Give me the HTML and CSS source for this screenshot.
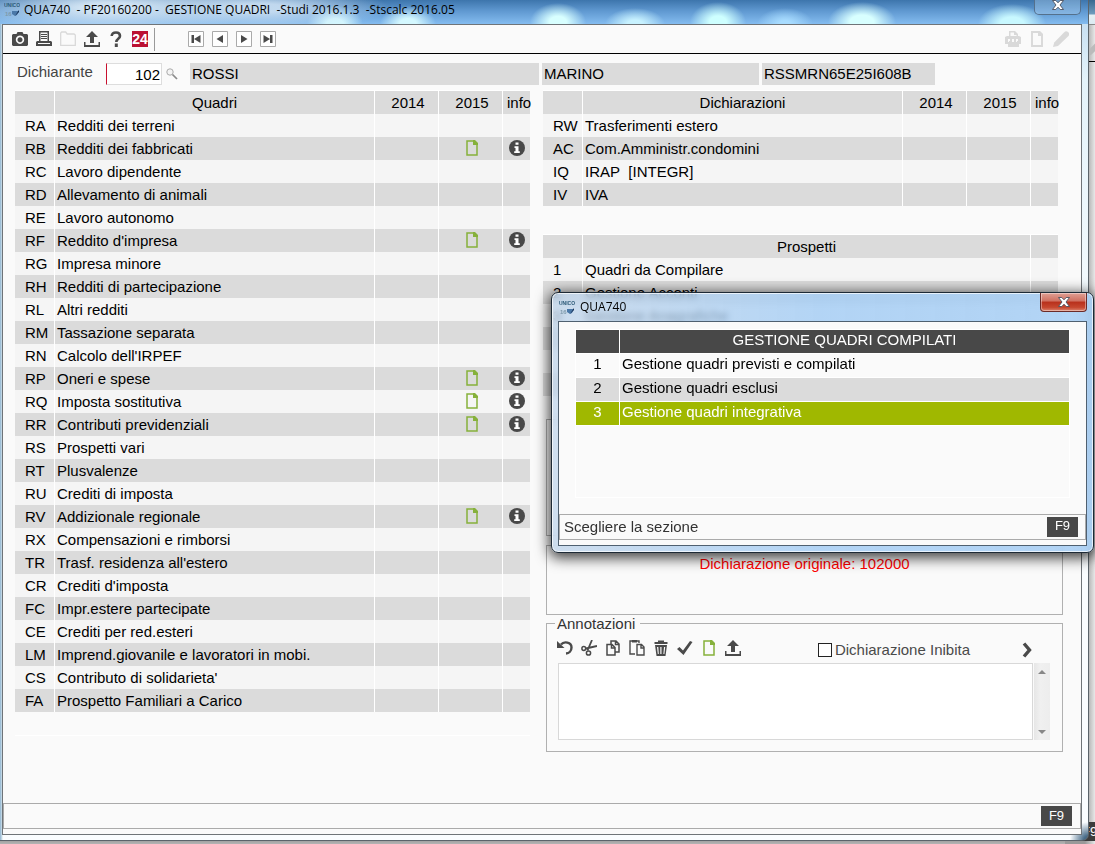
FILE: index.html
```html
<!DOCTYPE html>
<html lang="it">
<head>
<meta charset="utf-8">
<title>QUA740 - Gestione quadri</title>
<link rel="stylesheet" href="styles.css">
</head>
<body>
<svg class="sprite" aria-hidden="true">
  <symbol id="app" viewBox="0 0 16 16"><text class="logo-name" x="0" y="6">UNICO</text><text class="logo-year" x="1" y="15">16</text><path d="M8 10h7l-2 4-2 1-3-2z" fill="#4a78a8"/><path d="M15 9v2l-4 4z" fill="#132b50"/></symbol>
  <symbol id="camera" viewBox="0 0 16 16"><path fill-rule="evenodd" d="M1 3h3.500l1-2h5l1 2H15l1 1v10l-1 1H1l-1-1V4zM8 4.500a4.200 4.200 0 1 0 .01 0zM8 6.200a2.500 2.500 0 1 1-.01 0z"/></symbol>
  <symbol id="print" viewBox="0 0 16 16"><path fill-rule="evenodd" d="M3 0h10v10h2l1 1v4H0v-4l1-1h2zM4.500 1.500V10h7V1.500zM5 3h6v1H5zM5 5h6v1H5zM5 7h6v1H5zM2 12v1h12v-1z"/></symbol>
  <symbol id="folder" viewBox="0 0 16 16"><path d="M.700 14.300V2l1-1h4l1.500 2H14l1.300 1v10.300z" fill="none" stroke="currentColor" stroke-width="1.300"/></symbol>
  <symbol id="upload" viewBox="0 0 16 16"><path d="M8 0l6 6h-4v6H6V6H2zM0 11h1.500v3h13v-3H16v5H0z"/></symbol>
  <symbol id="help" viewBox="0 0 16 16"><path d="M3.700 5C3.900 2.500 5.500 1.500 8 1.500s4 1.400 4 3.400c0 3-3.700 2.600-3.700 6.100" fill="none" stroke="currentColor" stroke-width="2.600"/><path d="M6.800 12.500h3V16h-3z"/></symbol>
  <symbol id="first" viewBox="0 0 16 16"><path d="M.500.500h15v15H.500z" fill="#fff" stroke="#aaa"/><path d="M3.500 4H6v8H3.500zM12.500 4v8L6 8z"/></symbol>
  <symbol id="prev" viewBox="0 0 16 16"><path d="M.500.500h15v15H.500z" fill="#fff" stroke="#aaa"/><path d="M11 4v8L4.500 8z"/></symbol>
  <symbol id="next" viewBox="0 0 16 16"><path d="M.500.500h15v15H.500z" fill="#fff" stroke="#aaa"/><path d="M5 4v8l6.500-4z"/></symbol>
  <symbol id="last" viewBox="0 0 16 16"><path d="M.500.500h15v15H.500z" fill="#fff" stroke="#aaa"/><path d="M12.500 4H10v8h2.500zM3.500 4v8L10 8z"/></symbol>
  <symbol id="pdf" viewBox="0 0 16 16"><path fill-rule="evenodd" d="M4 0h6l3 3v2h1l2 1v7h-2v3H3v-3H0V6l2-1h2zM5.500 1.500V5h6V4H9V1.500zM3 8v3h1v-1h1V8zM7 8v3h2V8zM11 8v3h1v-1h1V8z"/></symbol>
  <symbol id="page" viewBox="0 0 16 16"><path d="M3 1h7l3 3v11H3z" fill="none" stroke="currentColor" stroke-width="1.900"/><path d="M9 0v5h5V3l-3-3z"/></symbol>
  <symbol id="doc" viewBox="0 0 12 16"><path d="M1 1h6.500L11 4.500V15H1z" fill="none" stroke="#86b13b" stroke-width="1.500"/><path d="M7 0v5h5V3L9 0z" fill="#86b13b"/></symbol>
  <symbol id="pencil" viewBox="0 0 16 16"><path d="M0 16l1.200-4.500L11 1.500Q13-.5 15 1t.5 4L5 15z"/></symbol>
  <symbol id="info" viewBox="0 0 16 16"><circle cx="8" cy="8" r="8"/><path d="M6.500 2.500h3v2.300h-3zM5.500 6.300h4v5h1.300V13H5.200v-1.700h1.300V8h-1z" fill="#fff"/></symbol>
  <symbol id="lens" viewBox="0 0 12 12"><circle cx="4" cy="4" r="3.200" fill="#f4f4f4" stroke="#aaa"/><path d="M6.500 6.500l4.500 4.500" stroke="#8a8a8a" stroke-width="1.700"/></symbol>
  <symbol id="undo" viewBox="0 0 16 16"><path d="M4 4.500C7 1 14.500 2 14.500 7.500 14.500 11 12 13.300 9 13.500" fill="none" stroke="currentColor" stroke-width="2.400"/><path d="M0 1v7h7.500z"/></symbol>
  <symbol id="cut" viewBox="0 0 16 16"><path d="M5 8.500L16 6M6.500 10.500L11 0" fill="none" stroke="currentColor" stroke-width="1.800"/><circle cx="2.800" cy="8.500" r="1.900" fill="none" stroke="currentColor" stroke-width="1.500"/><circle cx="7.500" cy="13" r="2.100" fill="none" stroke="currentColor" stroke-width="1.500"/></symbol>
  <symbol id="copy" viewBox="0 0 16 16"><path d="M6 4V1h5l3 3v8h-4M2 4.500h5l3 3V15H2zM6.500 5v3H10M10.500 1v3.500H14" fill="none" stroke="currentColor" stroke-width="1.500"/></symbol>
  <symbol id="paste" viewBox="0 0 16 16"><path d="M6 14H1V1h9v2M8 4.500h4.500L15 7v8H8zM12 5v3h3" fill="none" stroke="currentColor" stroke-width="1.400"/><path d="M3 0h5v2.500H3z"/></symbol>
  <symbol id="trash" viewBox="0 0 16 16"><path fill-rule="evenodd" d="M1.500 2H5V.5h6V2h3.500v2h-13zM2 5h12l-1.500 11h-9zM4 7l.8 7h1L5.300 7zM7.300 7v7h1.200V7zM11 7l-.6 7h1L12.200 7z"/></symbol>
  <symbol id="check" viewBox="0 0 16 16"><path d="M0 9l2.500-2L6 10.500 13 1l2.500 1L6.500 15z"/></symbol>
  <symbol id="chevron" viewBox="0 0 10 16"><path d="M2 1.500L7.500 8 2 14.500" fill="none" stroke="currentColor" stroke-width="3.400"/></symbol>
  <symbol id="close" viewBox="0 0 12 10"><path d="M.500.500h3.300L6 2.800 8.200.500h3.300L8 5l3.500 4.500H8.200L6 7.200 3.800 9.500H.500L4 5z" fill="#fff" stroke="#4b4f5c" stroke-width=".9"/></symbol>
</svg>

<div class="behind" aria-hidden="true">
  <svg class="behind-icon"><use href="#pencil"/></svg>
  <span class="behind-key">F9</span>
</div>

<main class="window">
  <header class="titlebar">
    <svg class="icon"><use href="#app"/></svg>
    <h1 class="title">QUA740&nbsp; - PF20160200 -&nbsp; GESTIONE QUADRI&nbsp; -Studi 2016.1.3&nbsp; -Stscalc 2016.05</h1>
    <button class="close glass" aria-label="Chiudi"><svg><use href="#close"/></svg></button>
  </header>

  <div class="client">
    <nav class="toolbar">
      <button class="tool" aria-label="Cattura"><svg class="icon"><use href="#camera"/></svg></button>
      <button class="tool" aria-label="Stampa"><svg class="icon"><use href="#print"/></svg></button>
      <button class="tool off" aria-label="Cartella"><svg class="icon"><use href="#folder"/></svg></button>
      <button class="tool" aria-label="Invia"><svg class="icon"><use href="#upload"/></svg></button>
      <button class="tool" aria-label="Aiuto"><svg class="icon"><use href="#help"/></svg></button>
      <button class="tool brand">24</button>
      <span class="divider"></span>
      <button class="tool" aria-label="Primo"><svg class="icon"><use href="#first"/></svg></button>
      <button class="tool" aria-label="Precedente"><svg class="icon"><use href="#prev"/></svg></button>
      <button class="tool" aria-label="Successivo"><svg class="icon"><use href="#next"/></svg></button>
      <button class="tool" aria-label="Ultimo"><svg class="icon"><use href="#last"/></svg></button>
      <span class="spacer"></span>
      <button class="tool off" aria-label="PDF"><svg class="icon"><use href="#pdf"/></svg></button>
      <button class="tool off" aria-label="Documento"><svg class="icon"><use href="#page"/></svg></button>
      <button class="tool off" aria-label="Modifica"><svg class="icon"><use href="#pencil"/></svg></button>
    </nav>

    <div class="person">
      <label class="person-label" for="dichiarante">Dichiarante</label>
      <input class="person-code" id="dichiarante" value="102">
      <button class="search" aria-label="Cerca"><svg><use href="#lens"/></svg></button>
      <output class="field">ROSSI</output>
      <output class="field">MARINO</output>
      <output class="field">RSSMRN65E25I608B</output>
    </div>

    <div class="columns">
      <div class="list">
        <table class="grid">
          <colgroup><col class="c-code"><col><col class="c-year"><col class="c-year"><col class="c-info"></colgroup>
          <thead><tr><th></th><th>Quadri</th><th>2014</th><th>2015</th><th>info</th></tr></thead>
          <tbody>
            <tr><td>RA</td><td>Redditi dei terreni</td><td></td><td></td><td></td></tr>
            <tr><td>RB</td><td>Redditi dei fabbricati</td><td></td><td><svg class="doc"><use href="#doc"/></svg></td><td><svg class="info"><use href="#info"/></svg></td></tr>
            <tr><td>RC</td><td>Lavoro dipendente</td><td></td><td></td><td></td></tr>
            <tr><td>RD</td><td>Allevamento di animali</td><td></td><td></td><td></td></tr>
            <tr><td>RE</td><td>Lavoro autonomo</td><td></td><td></td><td></td></tr>
            <tr><td>RF</td><td>Reddito d'impresa</td><td></td><td><svg class="doc"><use href="#doc"/></svg></td><td><svg class="info"><use href="#info"/></svg></td></tr>
            <tr><td>RG</td><td>Impresa minore</td><td></td><td></td><td></td></tr>
            <tr><td>RH</td><td>Redditi di partecipazione</td><td></td><td></td><td></td></tr>
            <tr><td>RL</td><td>Altri redditi</td><td></td><td></td><td></td></tr>
            <tr><td>RM</td><td>Tassazione separata</td><td></td><td></td><td></td></tr>
            <tr><td>RN</td><td>Calcolo dell'IRPEF</td><td></td><td></td><td></td></tr>
            <tr><td>RP</td><td>Oneri e spese</td><td></td><td><svg class="doc"><use href="#doc"/></svg></td><td><svg class="info"><use href="#info"/></svg></td></tr>
            <tr><td>RQ</td><td>Imposta sostitutiva</td><td></td><td><svg class="doc"><use href="#doc"/></svg></td><td><svg class="info"><use href="#info"/></svg></td></tr>
            <tr><td>RR</td><td>Contributi previdenziali</td><td></td><td><svg class="doc"><use href="#doc"/></svg></td><td><svg class="info"><use href="#info"/></svg></td></tr>
            <tr><td>RS</td><td>Prospetti vari</td><td></td><td></td><td></td></tr>
            <tr><td>RT</td><td>Plusvalenze</td><td></td><td></td><td></td></tr>
            <tr><td>RU</td><td>Crediti di imposta</td><td></td><td></td><td></td></tr>
            <tr><td>RV</td><td>Addizionale regionale</td><td></td><td><svg class="doc"><use href="#doc"/></svg></td><td><svg class="info"><use href="#info"/></svg></td></tr>
            <tr><td>RX</td><td>Compensazioni e rimborsi</td><td></td><td></td><td></td></tr>
            <tr><td>TR</td><td>Trasf. residenza all'estero</td><td></td><td></td><td></td></tr>
            <tr><td>CR</td><td>Crediti d'imposta</td><td></td><td></td><td></td></tr>
            <tr><td>FC</td><td>Impr.estere partecipate</td><td></td><td></td><td></td></tr>
            <tr><td>CE</td><td>Crediti per red.esteri</td><td></td><td></td><td></td></tr>
            <tr><td>LM</td><td>Imprend.giovanile e lavoratori in mobi.</td><td></td><td></td><td></td></tr>
            <tr><td>CS</td><td>Contributo di solidarieta'</td><td></td><td></td><td></td></tr>
            <tr><td>FA</td><td>Prospetto Familiari a Carico</td><td></td><td></td><td></td></tr>
          </tbody>
        </table>
      </div>

      <div class="side">
        <table class="grid">
          <colgroup><col class="c-code"><col><col class="c-year"><col class="c-year"><col class="c-info"></colgroup>
          <thead><tr><th></th><th>Dichiarazioni</th><th>2014</th><th>2015</th><th>info</th></tr></thead>
          <tbody>
            <tr><td>RW</td><td>Trasferimenti estero</td><td></td><td></td><td></td></tr>
            <tr><td>AC</td><td>Com.Amministr.condomini</td><td></td><td></td><td></td></tr>
            <tr><td>IQ</td><td>IRAP&nbsp; [INTEGR]</td><td></td><td></td><td></td></tr>
            <tr><td>IV</td><td>IVA</td><td></td><td></td><td></td></tr>
          </tbody>
        </table>

        <table class="grid prospects">
          <colgroup><col class="c-code"><col><col class="c-info"></colgroup>
          <thead><tr><th></th><th>Prospetti</th><th></th></tr></thead>
          <tbody>
            <tr><td>1</td><td>Quadri da Compilare</td><td></td></tr>
            <tr><td>2</td><td>Gestione Acconti</td><td></td></tr>
            <tr><td>3</td><td>Gestione Anagrafiche</td><td></td></tr>
            <tr><td></td><td></td><td></td></tr>
            <tr><td></td><td></td><td></td></tr>
            <tr><td></td><td></td><td></td></tr>
          </tbody>
        </table>

        <div class="box box-empty"></div>
        <div class="box box-origin">Dichiarazione originale: 102000</div>

        <fieldset class="notes">
          <legend>Annotazioni</legend>
          <div class="notes-bar">
            <button class="tool" aria-label="Annulla"><svg class="icon"><use href="#undo"/></svg></button>
            <button class="tool" aria-label="Taglia"><svg class="icon"><use href="#cut"/></svg></button>
            <button class="tool" aria-label="Copia"><svg class="icon"><use href="#copy"/></svg></button>
            <button class="tool" aria-label="Incolla"><svg class="icon"><use href="#paste"/></svg></button>
            <button class="tool" aria-label="Elimina"><svg class="icon"><use href="#trash"/></svg></button>
            <button class="tool" aria-label="Conferma"><svg class="icon"><use href="#check"/></svg></button>
            <button class="tool" aria-label="Nuovo"><svg class="icon"><use href="#doc"/></svg></button>
            <button class="tool" aria-label="Carica"><svg class="icon"><use href="#upload"/></svg></button>
            <span class="spacer"></span>
            <label class="inhibit"><input type="checkbox">Dichiarazione Inibita</label>
            <button class="tool forward" aria-label="Avanti"><svg><use href="#chevron"/></svg></button>
          </div>
          <div class="notes-body">
            <textarea aria-label="Annotazioni"></textarea>
            <div class="scroll"><span class="arrow up"></span><span class="arrow down"></span></div>
          </div>
        </fieldset>
      </div>
    </div>

    <footer class="status"><button class="key">F9</button></footer>
  </div>
</main>

<section class="dialog" role="dialog" aria-labelledby="dialog-title">
  <header class="dialog-bar">
    <svg class="icon"><use href="#app"/></svg>
    <h2 class="title" id="dialog-title">QUA740</h2>
    <button class="close red" aria-label="Chiudi"><svg><use href="#close"/></svg></button>
  </header>
  <div class="dialog-client">
    <div class="choices-frame">
      <table class="choices">
        <colgroup><col class="c-num"><col></colgroup>
        <thead><tr><th></th><th>GESTIONE QUADRI COMPILATI</th></tr></thead>
        <tbody>
          <tr><td>1</td><td>Gestione quadri previsti e compilati</td></tr>
          <tr><td>2</td><td>Gestione quadri esclusi</td></tr>
          <tr class="selected"><td>3</td><td>Gestione quadri integrativa</td></tr>
        </tbody>
      </table>
    </div>
    <footer class="dialog-status"><span>Scegliere la sezione</span><button class="key">F9</button></footer>
  </div>
</section>
</body>
</html>
```

FILE: styles.css
```css
* { box-sizing: border-box; }

body {
  position: relative;
  margin: 0;
  min-height: 100vh;
  display: flex;
  overflow-x: hidden;
  background: linear-gradient(#9c9c9c, #b4b4b4) bottom / 100% 4px no-repeat, #e4e4e4;
  color: #000;
  font: 15px/17px "Liberation Sans", Arial, sans-serif;
}

button, input, textarea { font: inherit; color: inherit; }
button { padding: 0; border: 0; background: none; }
svg { display: block; fill: currentColor; }
.sprite { position: absolute; width: 0; height: 0; }
.icon { flex: none; width: 16px; height: 16px; }
.spacer { flex: 1; }
.logo-name, .logo-year { font: bold 5px "Liberation Sans", Arial, sans-serif; fill: #2c5a78; }
.logo-year { font-size: 6px; fill: #7d99ab; }

/* Window partly covered by the main one */
.behind {
  position: absolute;
  inset: 0 0 0 auto;
  width: 30px;
  overflow: hidden;
  color: #bbb;
  background:
    linear-gradient(#000, #000) 0 61px / 100% 1px no-repeat,
    linear-gradient(#888, #888) 0 24px / 100% 1px no-repeat,
    linear-gradient(#37688f, #6f9cbd 14px, #e6f0f4 15px, #dcebf2) 0 0 / 100% 24px no-repeat,
    linear-gradient(90deg, #999 20px, #d8d8d8 28px, #e8e8e8);
}
.behind-icon { position: absolute; top: 40px; left: 21px; width: 16px; height: 16px; }
.behind-key {
  position: absolute;
  right: 0;
  bottom: 3px;
  width: 22px;
  padding-left: 9px;
  overflow: hidden;
  background: #3c3c3c;
  color: #fff;
  font-size: 13px;
  line-height: 19px;
}

/* Main window */
.window {
  position: relative;
  flex: 1;
  display: flex;
  flex-direction: column;
  margin: 0 6px 3px 0;
  padding: 0 6px 5px 2px;
  border: solid #5b646b;
  border-width: 0 1px 1px 0;
  border-radius: 0 0 7px 0;
  background:
    radial-gradient(circle at 100% 100%, #476b88 4px, transparent 18px),
    linear-gradient(90deg, #8fb4d0, #cfe0ea 2px, transparent 3px),
    linear-gradient(#bcd8ee, #e4f3fa 80px, #fafdff 400px);
}
.titlebar {
  display: flex;
  align-items: flex-start;
  gap: 4px;
  height: 24px;
  margin: 0 -6px 0 -2px;
  padding: 1px 7px 0 4px;
  background:
    radial-gradient(ellipse 150px 26px at 110px 8px, rgba(214, 231, 245, .95) 20%, transparent),
    radial-gradient(ellipse 130px 22px at 260px 8px, rgba(205, 225, 243, .9) 20%, transparent),
    radial-gradient(ellipse 28px 18px at 335px 24px, #d4f8ff 30%, transparent),
    radial-gradient(ellipse 28px 18px at 408px 24px, #d4f8ff 30%, transparent),
    radial-gradient(ellipse 28px 19px at 558px 22px, #d8ffff 30%, transparent),
    radial-gradient(ellipse 30px 16px at 635px 24px, #c8f2ff 25%, transparent),
    radial-gradient(ellipse 28px 20px at 718px 22px, #ceffff 30%, transparent),
    radial-gradient(ellipse 28px 16px at 785px 24px, #a8dcff 20%, transparent),
    radial-gradient(ellipse 34px 20px at 862px 22px, #d8ffff 35%, transparent),
    radial-gradient(ellipse 34px 20px at 1012px 24px, #c8f8ff 35%, transparent),
    linear-gradient(#3d75ac, #5f98d0 45%, #84bcf0);
}
.title {
  flex: 1;
  margin: 0;
  font: 12px/16px "Open Sans", "Noto Sans", sans-serif;
  color: #000;
}
.close { display: flex; align-items: center; justify-content: center; color: #fff; }
.close svg { width: 12px; height: 10px; }
.titlebar .title { padding-top: 1px; }
.glass {
  width: 47px;
  height: 15px;
  margin-top: -1px;
  padding-bottom: 5px;
  border: 1px solid #54708c;
  border-top: 0;
  border-radius: 0 0 5px 5px;
  background: rgba(190, 220, 245, .35);
}
.client {
  flex: 1;
  display: flex;
  flex-direction: column;
  padding-bottom: 5px;
  border: 1px solid #6f7478;
  background: #fafafa;
}

.toolbar {
  display: flex;
  align-items: center;
  gap: 8px;
  height: 29px;
  padding: 0 12px 0 9px;
  border-bottom: 1px solid #000;
  color: #4a4a4a;
}
.tool { flex: none; display: flex; align-items: center; justify-content: center; width: 16px; height: 16px; }
.off { color: #d9d9d9; }
.brand { background: #bb1133; color: #fff; font-weight: bold; font-size: 14px; line-height: 16px; }
.divider { width: 1px; height: 23px; margin: 0 25px 0 -2px; background: #999; }

.person {
  display: grid;
  grid-template-columns: 89px 56px 19px 349fr 217fr 173fr;
  column-gap: 3px;
  align-items: center;
  margin: 9px 146px 0 14px;
}
.person-label { color: #444; padding-bottom: 5px; }
.person-code {
  width: 56px;
  height: 22px;
  margin-left: -3px;
  padding: 0 1px;
  border: 1px solid #ddd;
  border-left: 1px solid #c8102e;
  background: #fff;
  text-align: right;
}
.search { width: 12px; margin-left: -2px; }
.search svg { width: 12px; height: 12px; }
.field { height: 22px; padding: 2px 2px 0; background: #dbdbdb; }

.columns {
  flex: 1;
  display: grid;
  grid-template-columns: 1fr 1fr;
  column-gap: 13px;
  align-items: start;
  padding: 5px 23px 0 12px;
}
.list { padding-bottom: 23px; border-bottom: 1px solid #fff; }
.grid {
  width: 100%;
  table-layout: fixed;
  border-collapse: separate;
  border-spacing: 0;
  border-top: 1px solid #fff;
}
.grid th, .grid td {
  height: 23px;
  padding: 0 2px 1px;
  border-right: 1px solid #fff;
  white-space: nowrap;
  background: #f5f5f5;
}
.grid th { background: #dbdbdb; font-weight: normal; text-align: center; }
.grid th:nth-child(n+3), .grid td:nth-child(n+3) { padding-left: 5px; }
.grid tr > :last-child { border-right: 0; padding-left: 0; padding-right: 0; }
.grid tbody tr:nth-child(even) td { background: #dbdbdb; }
.grid td:first-child { padding-left: 10px; padding-right: 0; }
.grid th:last-child { padding-left: 4px; }
.c-code { width: 40px; }
.c-year { width: 64px; }
.c-info { width: 27px; }
.doc { width: 12px; height: 16px; margin: 0 auto; }
.info { width: 16px; height: 16px; margin-left: 6px; color: #484848; }
.prospects { margin-top: 28px; }

.box { margin: 9px -5px 0 3px; border: 1px solid #b0b0b0; }
.box-empty { min-height: 117px; margin-top: 23px; }
.box-origin { min-height: 70px; padding-top: 9px; text-align: center; color: #f00; }

.notes {
  min-width: 0;
  margin: 0 -5px 0 3px;
  padding: 6px 12px 11px 11px;
  border: 1px solid #b0b0b0;
}
.notes legend { margin-left: -3px; padding: 0 5px 0 2px; color: #333; }
.notes-bar { display: flex; align-items: center; gap: 8px; height: 19px; margin: 0 0 6px -1px; color: #4a4a4a; }
.inhibit { display: flex; align-items: center; gap: 3px; padding-top: 4px; }
.inhibit input {
  appearance: none;
  width: 14px;
  height: 14px;
  margin: 0;
  border: 1px solid #222;
  background: #fff;
}
.forward { margin: 4px 15px 0 41px; }
.forward svg { width: 10px; height: 16px; }
.notes-body { display: flex; gap: 1px; }
.notes-body textarea {
  flex: 1;
  height: 77px;
  border: 1px solid #d8d8d8;
  background: #fff;
  resize: none;
}
.scroll {
  display: flex;
  flex-direction: column;
  align-items: center;
  justify-content: space-between;
  width: 16px;
  padding: 7px 0 6px;
  background: linear-gradient(90deg, #e6e6e6, #f0f0f0 40%, #ededed);
}
.arrow { border: solid transparent; border-width: 0 4px; }
.up { border-bottom: 4px solid #888; }
.down { border-top: 4px solid #888; }

.status { display: flex; justify-content: flex-end; height: 26px; padding: 2px 8px; border: 1px solid #aaa; }
.key { width: 31px; height: 20px; padding-bottom: 2px; background: #484848; color: #fff; font-size: 13px; }

/* Dialog laid over the main window */
.dialog {
  position: absolute;
  top: 292px;
  right: 1px;
  width: 543px;
  padding: 0 6px 6px;
  border: 1px solid #1d2a36;
  border-radius: 7px;
  background: linear-gradient(90deg, rgba(190, 212, 235, .72), rgba(160, 203, 245, .78) 50%, rgba(165, 205, 244, .85));
  backdrop-filter: blur(3px);
  box-shadow: inset 0 0 0 1px rgba(255, 255, 255, .7), 0 3px 14px 2px rgba(0, 0, 0, .75);
}
.dialog-bar { display: flex; align-items: flex-start; gap: 5px; height: 28px; }
.dialog-bar .icon { margin: 6px 0 0 1px; }
.dialog-bar .title { padding-top: 6px; }
.red {
  width: 47px;
  height: 19px;
  border: 1px solid #6b2b28;
  border-top: 0;
  border-radius: 0 0 4px 4px;
  background: linear-gradient(#e0a095, #cf6f5f 45%, #b8301c 50%, #c6472f 80%, #dc8570);
  box-shadow: inset 0 0 0 1px rgba(255, 255, 255, .4);
}
.dialog-client { padding-bottom: 5px; border: 1px solid #4f6070; background: #fafafa; }
.choices-frame { min-height: 169px; margin: 7px 16px 16px; border: 1px solid #fff; }
.choices { width: 100%; table-layout: fixed; border-spacing: 0; }
.c-num { width: 44px; }
.choices th, .choices td { height: 24px; padding: 0 2px 5px; border-bottom: 1px solid #fff; }
.choices th { background: #484848; color: #fff; font-weight: normal; }
.choices tr > :first-child { border-right: 1px solid #fff; text-align: center; }
.choices tbody tr:nth-child(even) td { background: #dbdbdb; }
.choices tbody .selected td { background: #a0b800; color: #fff; }
.dialog-status {
  display: flex;
  align-items: center;
  justify-content: space-between;
  height: 26px;
  padding: 0 7px 1px 4px;
  border: 1px solid #aaa;
  color: #333;
}
```
